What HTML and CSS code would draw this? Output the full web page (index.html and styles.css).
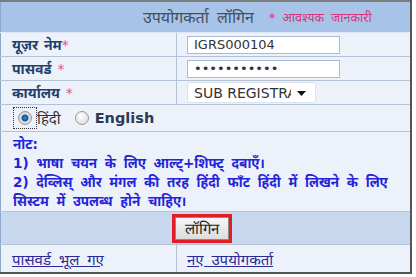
FILE: index.html
```html
<!DOCTYPE html>
<html lang="hi">
<head>
    <meta charset="UTF-8">
    <meta name="viewport" content="width=device-width, initial-scale=1.0">
    <title>उपयोगकर्ता लॉगिन</title>
    <link rel="stylesheet" href="styles.css">
</head>
<body>
    <table class="login-box">
        <tr class="head-row">
            <td colspan="2">
                <div class="head">
                    <span class="head-title">उपयोगकर्ता लॉगिन</span>
                    <span class="required-note">* आवश्यक जानकारी</span>
                </div>
            </td>
        </tr>
        <tr class="field-row">
            <td class="label-cell"><label for="username">यूज़र नेम<span class="star">*</span></label></td>
            <td class="input-cell"><input type="text" id="username" class="text-input" value="IGRS000104"></td>
        </tr>
        <tr class="field-row">
            <td class="label-cell"><label for="password">पासवर्ड <span class="star">*</span></label></td>
            <td class="input-cell"><input type="password" id="password" class="text-input" value="abcdefghijk"></td>
        </tr>
        <tr class="field-row">
            <td class="label-cell"><label for="office">कार्यालय <span class="star">*</span></label></td>
            <td class="input-cell">
                <div class="select-wrap">
                    <select id="office" class="office-select">
                        <option>SUB REGISTRAR OFFICE</option>
                    </select>
                    <svg class="select-arrow" width="9" height="5" viewBox="0 0 9 5"><path d="M0 0h9L4.5 5z" fill="#111"/></svg>
                </div>
            </td>
        </tr>
        <tr class="lang-row">
            <td colspan="2">
                <div class="lang">
                    <label class="lang-option"><span class="radio-focus"><input type="radio" name="lang" checked></span><span class="hindi">हिंदी</span></label>
                    <label class="lang-option"><input type="radio" name="lang"><span class="english">English</span></label>
                </div>
            </td>
        </tr>
        <tr class="note-row">
            <td colspan="2">
                <div class="note">
                    <p>नोट:</p>
                    <p>1) भाषा चयन के लिए आल्ट्+शिफ्ट् दबाएँ।</p>
                    <p>2) देव्लिस् और मंगल की तरह हिंदी फॉंट हिंदी में लिखने के लिए सिस्टम में उपलब्ध होने चाहिए।</p>
                </div>
            </td>
        </tr>
        <tr class="button-row">
            <td colspan="2">
                <div class="button-frame"><button class="login-btn">लॉगिन</button></div>
            </td>
        </tr>
        <tr class="link-row">
            <td class="label-cell"><a href="#">पासवर्ड भूल गए</a></td>
            <td class="input-cell"><a href="#">नए उपयोगकर्ता</a></td>
        </tr>
    </table>
</body>
</html>
```
FILE: styles.css
```css
body {
    margin: 0;
    background: #fff;
    font-family: "DejaVu Sans", "Noto Sans", sans-serif;
}
.login-box {
    width: 412px;
    border-collapse: collapse;
    border-top: 2px solid #7d7d7d;
    border-right: 2px solid #555;
    border-bottom: 2px solid #555;
    border-left: 1px solid #8fa8c8;
    background: #edf2fa;
    word-spacing: 3px;
}
.login-box td {
    padding: 0;
    border-top: 1px solid #b3c3d7;
}
.label-cell {
    width: 164px;
    padding-left: 11px !important;
    border-right: 1px solid #b3c3d7;
}
.input-cell {
    padding-left: 10px !important;
}
.head-row td {
    background: #a7c3e7;
    height: 30px;
    border-top: none;
    border-bottom: 1px solid #dde6f2;
}
.head {
    display: flex;
    align-items: center;
    padding-left: 142px;
}
.head-title {
    font-size: 16px;
    color: #444f5e;
}
.required-note {
    margin-left: 15px;
    font-size: 12.5px;
    word-spacing: 3px;
    color: #d9357a;
}
.field-row td {
    height: 23px;
}
.field-row label {
    font-size: 14px;
    font-weight: bold;
    color: #20406a;
    word-spacing: 1px;
}
.star {
    color: #e0509a;
    font-weight: normal;
}
.text-input {
    display: block;
    width: 153px;
    height: 18px;
    box-sizing: border-box;
    border: 1px solid #a5bcd6;
    padding: 0 6px;
    font-family: "DejaVu Sans", sans-serif;
    font-size: 13px;
    color: #333;
    background: #fff;
    word-spacing: 0;
}
.select-wrap {
    position: relative;
    width: 129px;
}
.office-select {
    appearance: none;
    display: block;
    width: 129px;
    height: 21px;
    border: 1px solid #dde2ea;
    border-radius: 2px;
    background: #fff;
    padding: 0 24px 0 6px;
    font-family: "DejaVu Sans", sans-serif;
    font-size: 14px;
    color: #333;
    word-spacing: 0;
}
.select-arrow {
    position: absolute;
    right: 10px;
    top: 9px;
}
.lang-row td {
    height: 26px;
}
.lang {
    display: flex;
    align-items: center;
    padding-left: 12px;
}
.lang-option {
    display: flex;
    align-items: center;
    font-size: 14px;
    color: #333;
}
.radio-focus {
    display: flex;
    padding: 4px 5px;
    outline: 1px dotted #333;
    outline-offset: -1px;
}
.lang-option input {
    appearance: none;
    width: 14px;
    height: 14px;
    margin: 0;
    border: 1px solid #9a9a9a;
    border-radius: 50%;
    background: radial-gradient(circle at 40% 35%, #fff, #d4d4d4);
}
.lang-option input:checked {
    background: radial-gradient(circle, #2a8ccc 0, #0d5b92 3px, #e8e8e8 4px, #cfcfcf 6px);
}
.hindi {
    margin-right: 14px;
    font-size: 15px;
}
.english {
    margin-left: 6px;
    font-size: 14.5px;
    font-weight: bold;
    color: #2b3a55;
}
.note-row td {
    height: 77px;
    vertical-align: top;
}
.note {
    padding: 3px 12px 0;
    color: #2323d8;
    font-size: 13.5px;
    font-weight: bold;
    line-height: 19px;
}
.note p {
    margin: 0;
}
.button-row td {
    background: #c8d9ef;
    height: 32px;
}
.button-frame {
    width: 54px;
    margin-left: 171px;
    border: 3px solid #e01e24;
}
.login-btn {
    display: block;
    width: 54px;
    height: 23px;
    border: 1px solid #8a8a8a;
    background: linear-gradient(#f6f6f6, #dcdcdc);
    font-family: "DejaVu Sans", sans-serif;
    font-size: 15px;
    color: #222;
    padding: 0;
}
.link-row td {
    height: 27px;
}
.link-row a {
    font-size: 15px;
    color: #2a2a96;
}
```
